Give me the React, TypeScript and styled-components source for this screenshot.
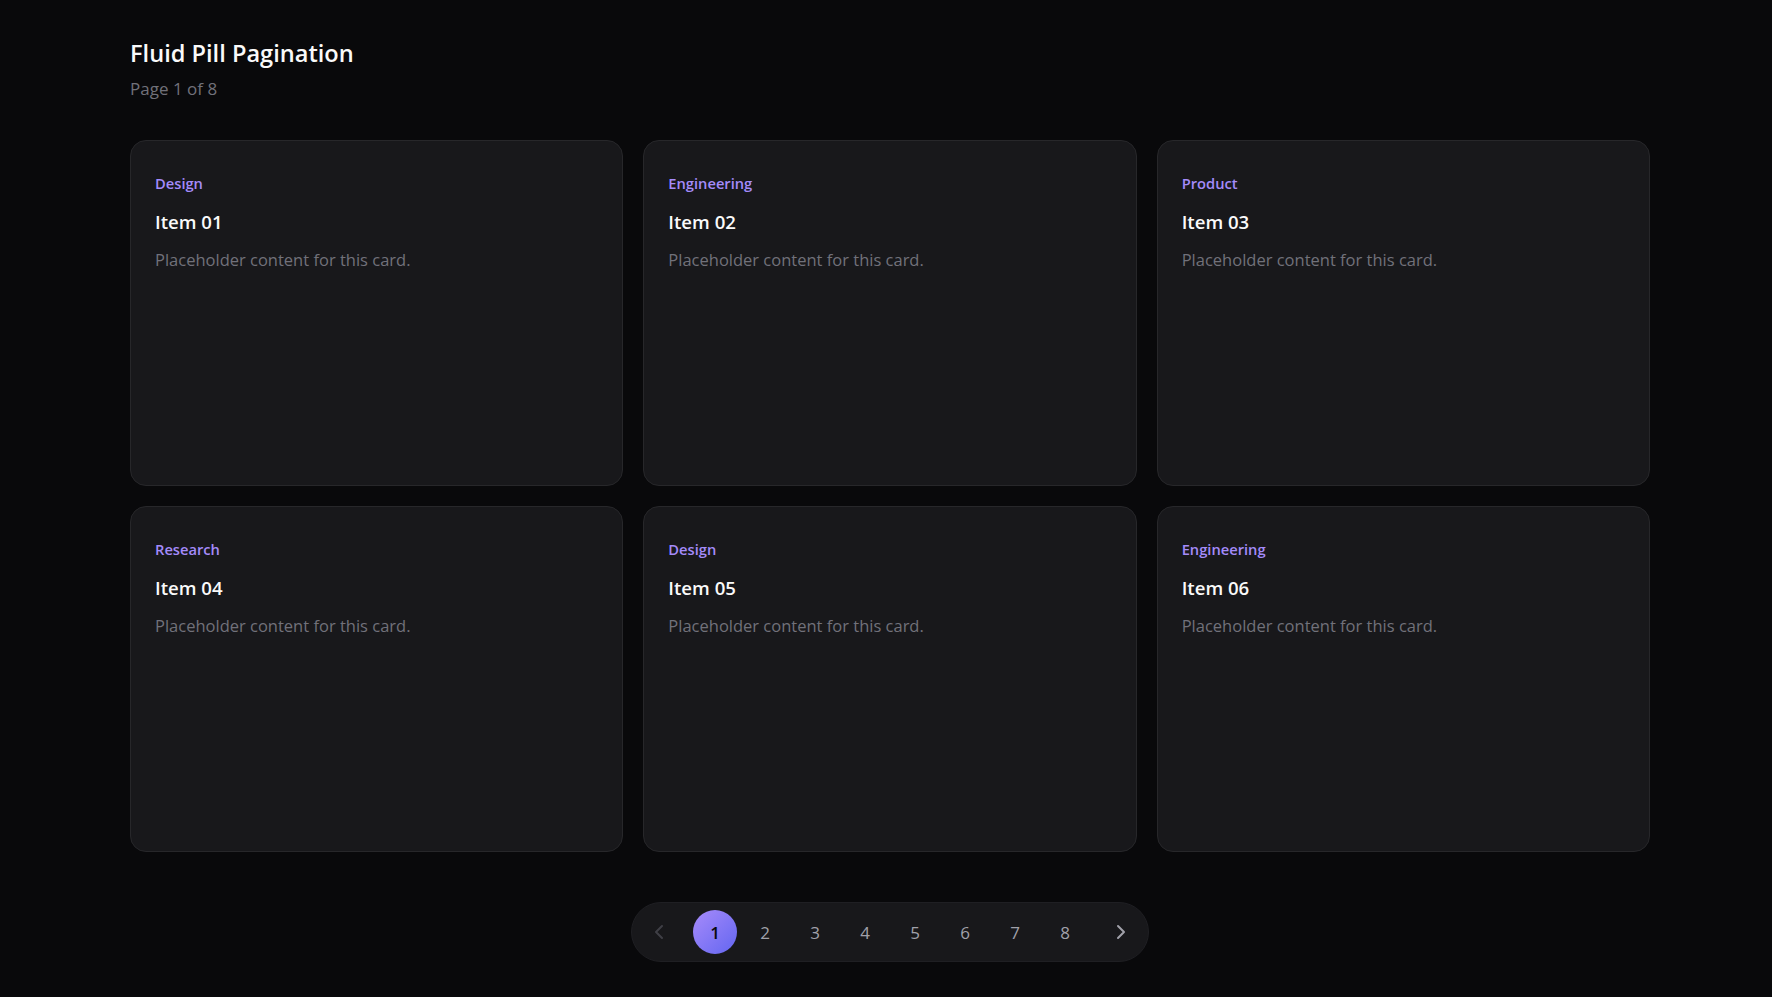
import { useState } from 'react';
import styled, { createGlobalStyle } from 'styled-components';
import { ChevronLeft, ChevronRight } from 'lucide-react';

const GlobalStyle = createGlobalStyle`
  html, body {
    margin: 0;
    padding: 0;
    background: #09090b;
  }

  body {
    font-family: 'Open Sans', 'Noto Sans', sans-serif;
    color: #fafafa;
  }
`;

const Page = styled.main`
  width: 1520px;
  margin-left: 130px;
  padding: 37px 0 35px;
  display: flex;
  flex-direction: column;
`;

const Header = styled.header`
  display: flex;
  flex-direction: column;
  gap: 8px;
  margin-bottom: 39px;
`;

const Title = styled.h1`
  margin: 0;
  font-size: 23.6px;
  line-height: 32px;
  font-weight: 600;
  color: #fafafa;
`;

const Subtitle = styled.p`
  margin: 0;
  font-size: 17px;
  line-height: 24px;
  color: #71717a;
`;

const Grid = styled.section`
  display: grid;
  grid-template-columns: repeat(3, 1fr);
  grid-auto-rows: 346px;
  gap: 20px;
`;

const Card = styled.article`
  background: #18181b;
  border: 1px solid #27272a;
  border-radius: 16px;
  padding: 32px 24px;
  display: flex;
  flex-direction: column;
`;

const Tag = styled.span`
  font-size: 14.7px;
  line-height: 20px;
  font-weight: 600;
  color: #a48bfa;
`;

const CardTitle = styled.h3`
  margin: 15px 0 0;
  font-size: 18.6px;
  line-height: 28px;
  font-weight: 600;
  color: #fafafa;
`;

const CardText = styled.p`
  margin: 12px 0 0;
  font-size: 16.5px;
  line-height: 24px;
  color: #71717a;
`;

const Pager = styled.nav`
  align-self: center;
  margin-top: 50px;
  display: flex;
  align-items: center;
  gap: 12px;
  padding: 7px 5px;
  background: #18181b;
  border: 1px solid #1f1f23;
  border-radius: 999px;
`;

const Pages = styled.div`
  display: flex;
  gap: 6px;
`;

const Arrow = styled.button<{ $disabled?: boolean }>`
  width: 44px;
  height: 44px;
  border: 0;
  padding: 0;
  background: transparent;
  display: flex;
  align-items: center;
  justify-content: center;
  border-radius: 50%;
  color: ${(p) => (p.$disabled ? '#3f3f46' : '#a1a1aa')};
  cursor: ${(p) => (p.$disabled ? 'default' : 'pointer')};
`;

const PageButton = styled.button<{ $active?: boolean }>`
  width: 44px;
  height: 44px;
  border: 0;
  padding: 0;
  border-radius: 50%;
  font-family: inherit;
  font-size: 17px;
  font-weight: ${(p) => (p.$active ? 600 : 500)};
  color: ${(p) => (p.$active ? '#09090b' : '#a1a1aa')};
  background: ${(p) =>
    p.$active ? 'linear-gradient(135deg, #a78bfa 0%, #6366f1 100%)' : 'transparent'};
  cursor: pointer;
`;

const items = [
  { tag: 'Design', title: 'Item 01' },
  { tag: 'Engineering', title: 'Item 02' },
  { tag: 'Product', title: 'Item 03' },
  { tag: 'Research', title: 'Item 04' },
  { tag: 'Design', title: 'Item 05' },
  { tag: 'Engineering', title: 'Item 06' },
];

const TOTAL = 8;

export default function App() {
  const [page, setPage] = useState(1);

  return (
    <>
      <GlobalStyle />
      <Page>
        <Header>
          <Title>Fluid Pill Pagination</Title>
          <Subtitle>
            Page {page} of {TOTAL}
          </Subtitle>
        </Header>
        <Grid>
          {items.map((item) => (
            <Card key={item.title}>
              <Tag>{item.tag}</Tag>
              <CardTitle>{item.title}</CardTitle>
              <CardText>Placeholder content for this card.</CardText>
            </Card>
          ))}
        </Grid>
        <Pager>
          <Arrow $disabled={page === 1} onClick={() => setPage((p) => Math.max(1, p - 1))}>
            <ChevronLeft size={24} strokeWidth={2} />
          </Arrow>
          <Pages>
            {Array.from({ length: TOTAL }, (_, i) => i + 1).map((n) => (
              <PageButton key={n} $active={n === page} onClick={() => setPage(n)}>
                {n}
              </PageButton>
            ))}
          </Pages>
          <Arrow
            $disabled={page === TOTAL}
            onClick={() => setPage((p) => Math.min(TOTAL, p + 1))}
          >
            <ChevronRight size={24} strokeWidth={2} />
          </Arrow>
        </Pager>
      </Page>
    </>
  );
}
